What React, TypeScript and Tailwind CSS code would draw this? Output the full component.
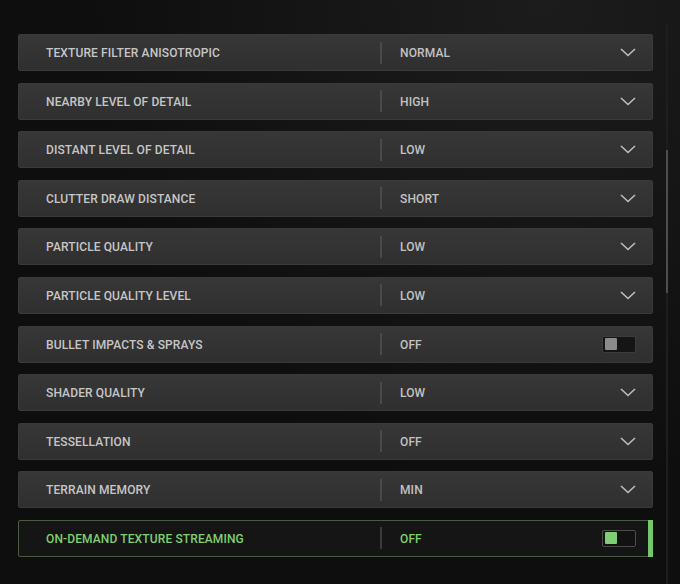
import React from "react";

type Row = { label: string; value: string; kind: "select" | "toggle"; active?: boolean };

const rows: Row[] = [
  { label: "TEXTURE FILTER ANISOTROPIC", value: "NORMAL", kind: "select" },
  { label: "NEARBY LEVEL OF DETAIL", value: "HIGH", kind: "select" },
  { label: "DISTANT LEVEL OF DETAIL", value: "LOW", kind: "select" },
  { label: "CLUTTER DRAW DISTANCE", value: "SHORT", kind: "select" },
  { label: "PARTICLE QUALITY", value: "LOW", kind: "select" },
  { label: "PARTICLE QUALITY LEVEL", value: "LOW", kind: "select" },
  { label: "BULLET IMPACTS & SPRAYS", value: "OFF", kind: "toggle" },
  { label: "SHADER QUALITY", value: "LOW", kind: "select" },
  { label: "TESSELLATION", value: "OFF", kind: "select" },
  { label: "TERRAIN MEMORY", value: "MIN", kind: "select" },
  { label: "ON-DEMAND TEXTURE STREAMING", value: "OFF", kind: "toggle", active: true },
];

function Chevron() {
  return (
    <svg width="16" height="9" viewBox="0 0 16 9" fill="none">
      <path d="M1 1L8 7.5L15 1" stroke="#bdbdbd" strokeWidth="1.6" />
    </svg>
  );
}

function SettingRow({ r }: { r: Row }) {
  const active = !!r.active;
  return (
    <div
      className={
        "relative flex items-center h-[37px] rounded-[2px] border " +
        (active
          ? "border-[#4b5a45] bg-[#151515]"
          : "border-[#3a3a3a] bg-gradient-to-b from-[#373737] to-[#2f2f2f]")
      }
    >
      <div
        className={
          "w-[361px] pl-[27px] pt-[1px] text-[12px] font-medium tracking-[0.01em] " +
          (active ? "text-[#7fcf6f]" : "text-[#c6c6c6]")
        }
      >
        {r.label}
      </div>
      <div className={"w-[2px] h-[22px] " + (active ? "bg-[#3a3a3a]" : "bg-[#4a4a4a]")} />
      <div
        className={
          "flex-1 pl-[18px] pt-[1px] text-[12px] font-medium tracking-[0.01em] " +
          (active ? "text-[#7fcf6f]" : "text-[#c2c2c2]")
        }
      >
        {r.value}
      </div>
      <div className="pr-[16px] flex items-center">
        {r.kind === "select" ? (
          <Chevron />
        ) : (
          <div
            className={
              "w-[34px] h-[17px] rounded-[2px] border p-[2px] flex items-center " +
              (active ? "border-[#4b4f48] bg-[#121212]" : "border-[#3c3c3c] bg-[#151515]")
            }
          >
            <div className={"w-[12px] h-[12px] rounded-[1px] " + (active ? "bg-[#7fce76]" : "bg-[#8a8a8a]")} />
          </div>
        )}
      </div>
      {active && <div className="absolute right-[-1px] top-[-1px] bottom-[-1px] w-[5px] bg-[#74c76a]" />}
    </div>
  );
}

export default function App() {
  return (
    <div
      className="relative w-[680px] h-[584px] overflow-hidden bg-[#0f0f0f]"
      style={{
        fontFamily: "Roboto, 'Noto Sans', sans-serif",
        backgroundImage:
          "radial-gradient(ellipse at 80% 0%, #1c1c1c 0%, #0e0e0e 60%), linear-gradient(#111,#111)",
      }}
    >
      <div className="flex pt-[34px] pl-[18px]">
        <div className="w-[635px] flex flex-col gap-[11.6px]">
          {rows.map((r) => (
            <SettingRow key={r.label} r={r} />
          ))}
        </div>
      </div>
      <div className="absolute left-[666px] top-[24px] bottom-0 w-[2px] bg-[#1e1e1e]" />
      <div className="absolute left-[666px] top-[150px] h-[143px] w-[2px] bg-[#4e4e4e]" />
    </div>
  );
}
